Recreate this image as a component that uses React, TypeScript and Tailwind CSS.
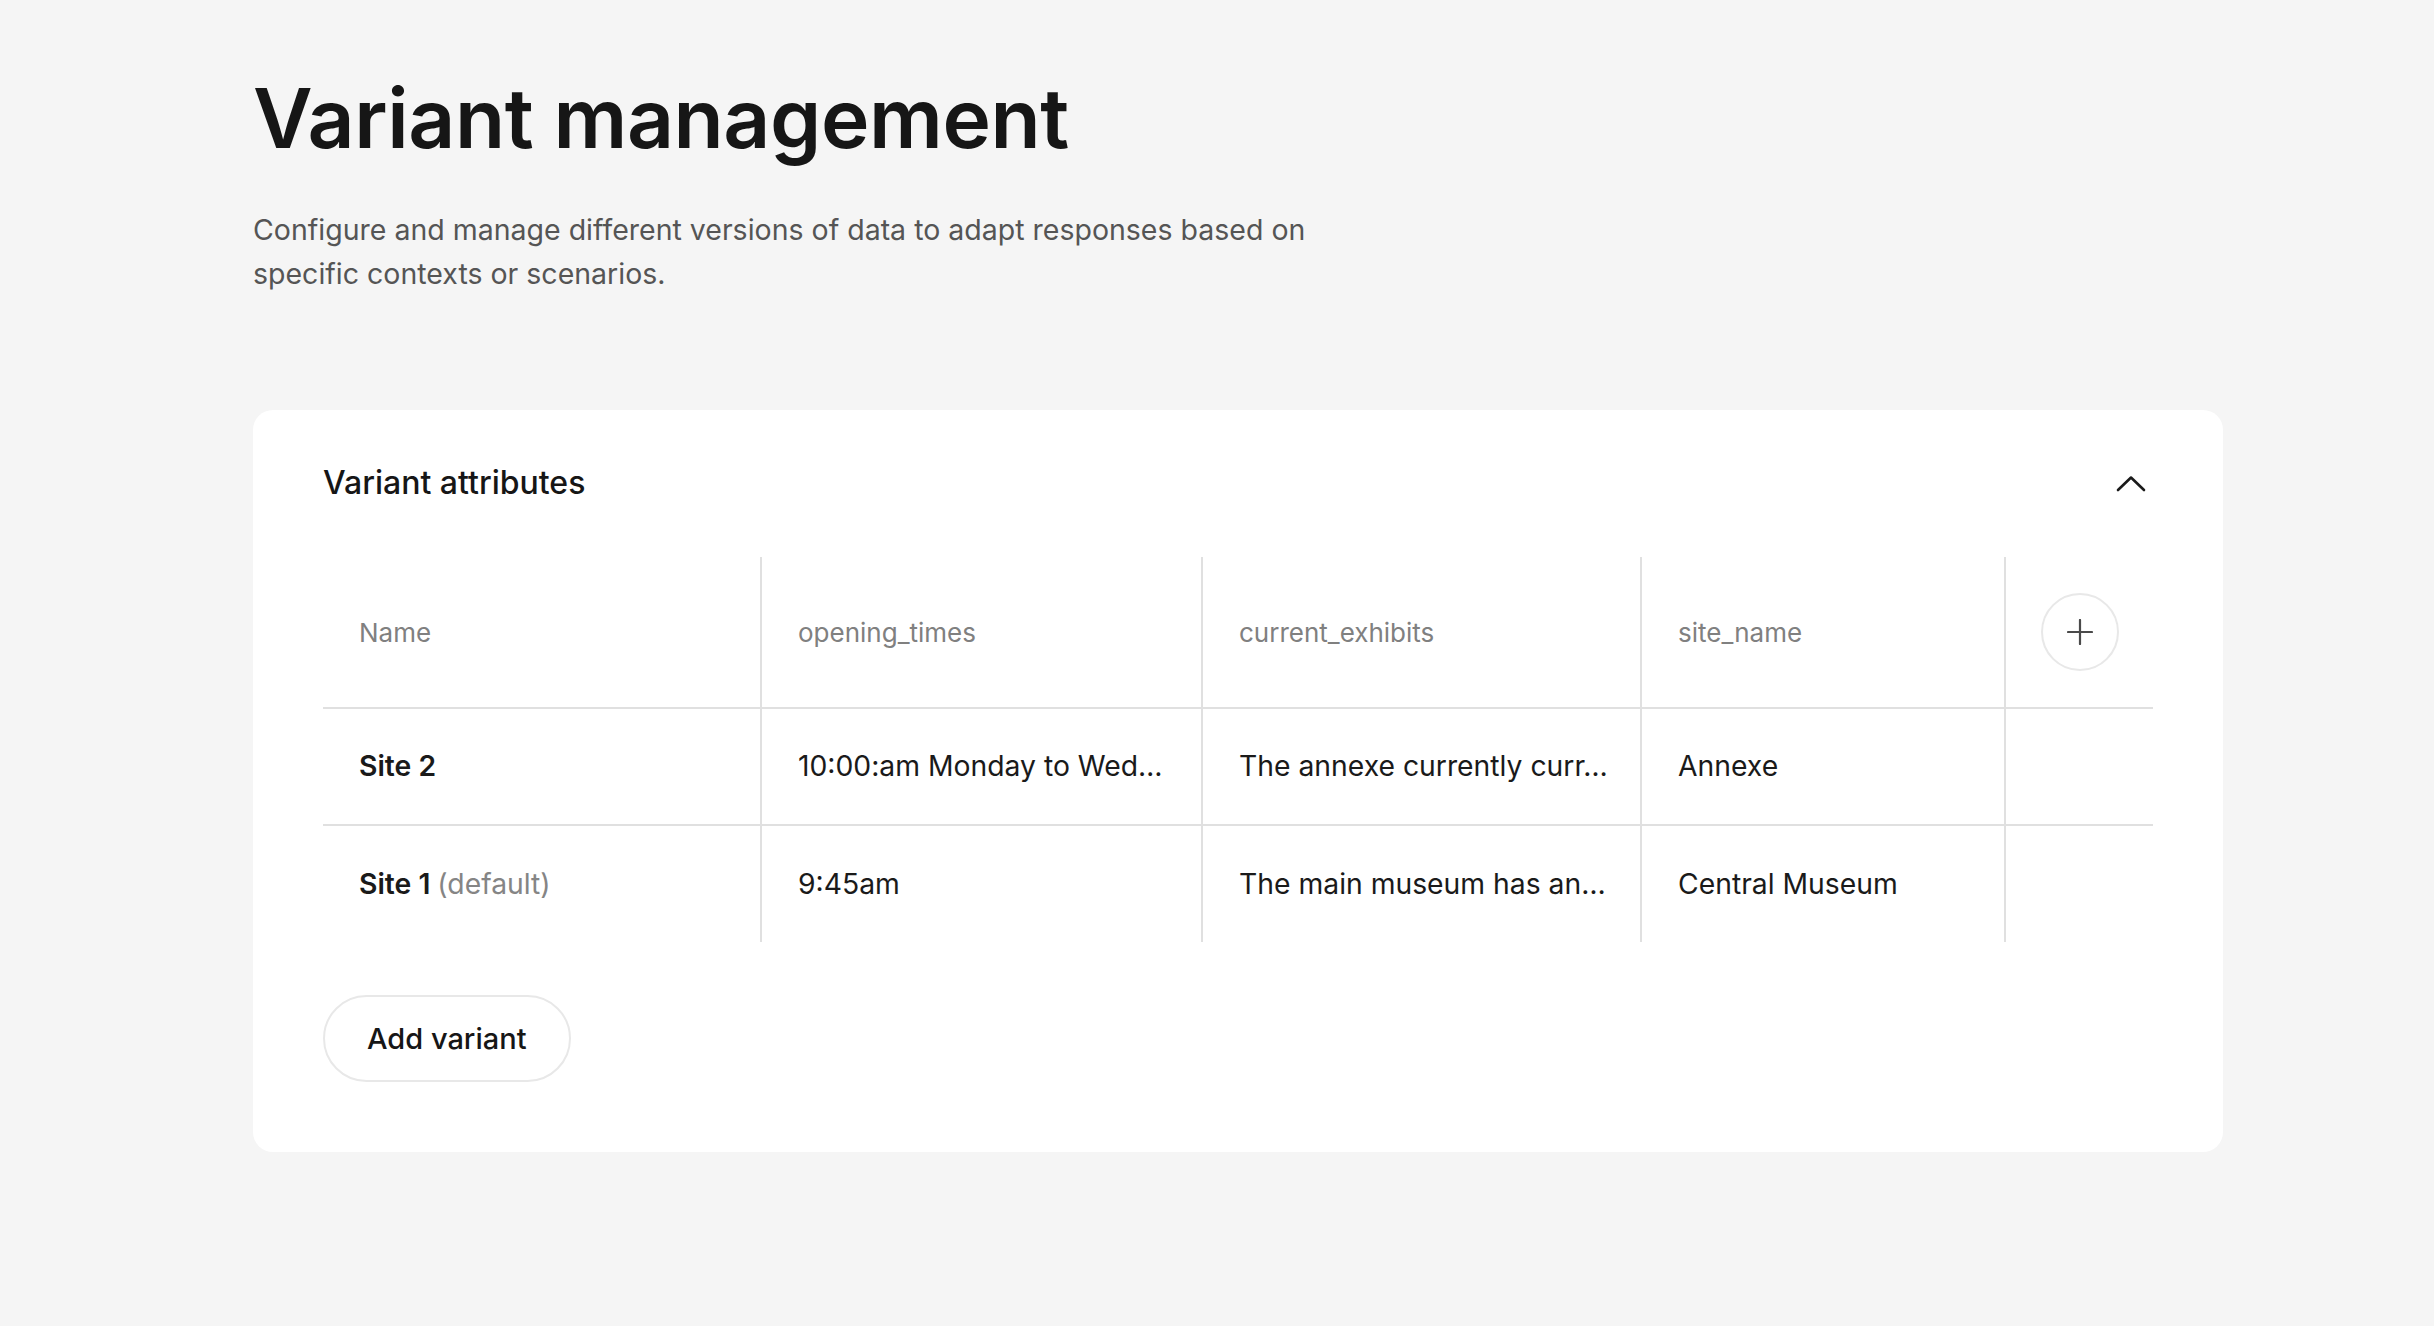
import React from "react";

const columns = ["opening_times", "current_exhibits", "site_name"];

const rows = [
  {
    name: "Site 2",
    isDefault: false,
    values: ["10:00:am Monday to Wed…", "The annexe currently curr…", "Annexe"],
  },
  {
    name: "Site 1",
    isDefault: true,
    values: ["9:45am", "The main museum has an…", "Central Museum"],
  },
];

function ChevronUp() {
  return (
    <svg width="30" height="17" viewBox="0 0 30 17" fill="none">
      <polyline points="2,15 15,2.5 28,15" stroke="#1a1a1a" strokeWidth="2.6" strokeLinecap="round" strokeLinejoin="round" />
    </svg>
  );
}

function PlusIcon() {
  return (
    <svg width="26" height="26" viewBox="0 0 26 26" fill="none">
      <path d="M13 1v24M1 13h24" stroke="#4a4a4a" strokeWidth="2.2" strokeLinecap="round" />
    </svg>
  );
}

export default function App() {
  return (
    <div className="min-h-screen bg-[#f5f5f5] font-['Inter',sans-serif] text-[#1a1a1a]">
      <div className="pl-[253px] pt-[78px] pb-[100px]">
        <h1 className="text-[82px] leading-[82px] font-semibold tracking-[-0.005em] text-[#161616]">
          Variant management
        </h1>
        <p className="mt-[48px] whitespace-nowrap text-[28.5px] leading-[44px] text-[#555555]">
          Configure and manage different versions of data to adapt responses based on
          <br />
          specific contexts or scenarios.
        </p>

        {/* Card */}
        <div className="mt-[114px] w-[1970px] rounded-[20px] bg-white px-[70px] pt-[53px] pb-[70px]">
          <div className="flex h-[40px] items-center justify-between">
            <h2 className="text-[32px] leading-[40px] font-medium text-[#161616]">Variant attributes</h2>
            <button type="button" className="flex h-[44px] w-[44px] items-center justify-center">
              <ChevronUp />
            </button>
          </div>

          {/* Table */}
          <div className="mt-[54px] grid grid-cols-[439px_441px_439px_364px_147px]">
            {/* Header row */}
            <div className="flex h-[152px] items-center border-b-2 border-r-2 border-[#e0e0e0] pl-[36px] text-[26px] text-[#808080]">
              Name
            </div>
            {columns.map((c) => (
              <div
                key={c}
                className="flex h-[152px] items-center border-b-2 border-r-2 border-[#e0e0e0] pl-[36px] text-[26px] text-[#808080]"
              >
                {c}
              </div>
            ))}
            <div className="flex h-[152px] items-center justify-center border-b-2 border-[#e0e0e0]">
              <button
                type="button"
                className="flex h-[78px] w-[78px] items-center justify-center rounded-full border-2 border-[#e8e8e8]"
              >
                <PlusIcon />
              </button>
            </div>

            {/* Data rows */}
            {rows.map((r, i) => {
              const last = i === rows.length - 1;
              const rowCls = last ? "h-[116px]" : "h-[117px] border-b-2";
              return (
                <React.Fragment key={r.name}>
                  <div className={`flex ${rowCls} items-center border-r-2 border-[#e0e0e0] pl-[36px] text-[28.3px]`}>
                    <span className="font-semibold">{r.name}</span>
                    {r.isDefault && <span className="ml-[7px] text-[#858585]">(default)</span>}
                  </div>
                  {r.values.map((v, j) => (
                    <div
                      key={j}
                      className={`flex ${rowCls} items-center border-r-2 border-[#e0e0e0] pl-[36px] pr-[20px] text-[28.3px]`}
                    >
                      <span className="truncate">{v}</span>
                    </div>
                  ))}
                  <div className={`${rowCls} border-[#e0e0e0]`} />
                </React.Fragment>
              );
            })}
          </div>

          <button
            type="button"
            className="mt-[53px] flex h-[87px] items-center rounded-full border-2 border-[#e8e8e8] px-[42px] text-[29px] font-medium text-[#161616]"
          >
            Add variant
          </button>
        </div>
      </div>
    </div>
  );
}
